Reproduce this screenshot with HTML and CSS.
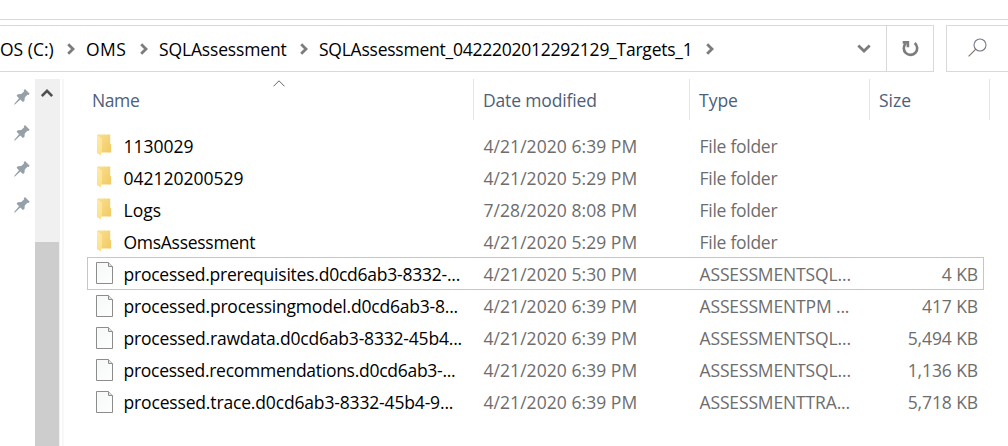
FILE: index.html
```html
<!DOCTYPE html>
<html lang="en">
<head>
<meta charset="utf-8">
<title>SQLAssessment_0422202012292129_Targets_1</title>
<link rel="stylesheet" href="styles.css">
</head>
<body>
<svg class="defs" width="0" height="0">
  <defs>
    <linearGradient id="gb" x1="0" y1="0" x2="1" y2="1"><stop offset="0" stop-color="#fbe08f"/><stop offset="1" stop-color="#efc95f"/></linearGradient>
    <linearGradient id="gf" x1="0" y1="0" x2="0" y2="1"><stop offset="0" stop-color="#ffeaae"/><stop offset="1" stop-color="#ffdf84"/></linearGradient>
    <linearGradient id="gp" x1="0" y1="0" x2="1" y2="1"><stop offset="0" stop-color="#f6f7f7"/><stop offset="1" stop-color="#fdfefe"/></linearGradient>
  </defs>
  <symbol id="folder" viewBox="0 0 15 22"><path d="M0 .5H13.2V9.5L14.2 10.5V18.5H4V21L0 19Z" fill="url(#gb)"/><path d="M0 1L4.3 4.2Q5 5 5 6V18.5H4V21.5L0 18.7Z" fill="url(#gf)"/></symbol>
  <symbol id="file" viewBox="0 0 17 22"><path d="M.5.5H12.5L16.5 4.5V21.5H.5Z" fill="url(#gp)" stroke="#8c8c8c"/><path d="M12.5 .5V4.5H16.5" fill="#e4e4e4" stroke="#8c8c8c"/></symbol>
  <symbol id="pin" viewBox="0 0 16 16"><path d="M9.8 1.2L11 0L15.7 4.7L14.5 5.9L13.4 5.7L10.8 8.6L10.4 12L8.9 13.1L6.3 10.4L1 15.4L.2 15.6L.4 14.7L5 9.2L2.6 6.7L3.8 5.2L7.2 5L10 2.4Z" fill="#95a0a8"/></symbol>
  <symbol id="chev" viewBox="0 0 8 12"><path d="M1.2 1.3L6 6L1.2 10.7" fill="none" stroke="#7c7c7c" stroke-width="2.8"/></symbol>
</svg>
<div class="explorer">
  <header class="toolbar">
    <div class="address">
      <nav class="crumbs">
        <span class="c-drive">OS (C:)</span><svg class="chev"><use href="#chev"/></svg>
        <span class="c-oms">OMS</span><svg class="chev"><use href="#chev"/></svg>
        <span class="c-sql">SQLAssessment</span><svg class="chev"><use href="#chev"/></svg>
        <span class="c-targets">SQLAssessment_0422202012292129_Targets_1</span><svg class="chev"><use href="#chev"/></svg>
      </nav>
      <svg class="drop" viewBox="0 0 14 9"><path d="M1.3 1.5L7 7L12.7 1.5" fill="none" stroke="#7c7c7c" stroke-width="2.8"/></svg>
      <div class="refresh"><svg width="17" height="17" viewBox="0 0 17 17"><path d="M12.7 3A6.7 6.7 0 1 1 3.7 3.5" fill="none" stroke="#7c7c7c" stroke-width="2.6"/><path d="M.7 1H7.2V7.2H4.6V3.8H.7Z" fill="#7c7c7c"/></svg></div>
    </div>
    <div class="search"><svg width="19" height="19" viewBox="0 0 19 19"><circle cx="12" cy="7" r="6" fill="none" stroke="#777b88" stroke-width="1.1"/><path d="M7.8 11.2L.6 18.4" stroke="#87756c" stroke-width="1.2"/></svg></div>
  </header>
  <main class="body">
    <aside class="pins">
      <svg><use href="#pin"/></svg><svg><use href="#pin"/></svg><svg><use href="#pin"/></svg><svg><use href="#pin"/></svg>
    </aside>
    <div class="scrollbar"><svg width="12" height="10" viewBox="0 0 12 10"><path d="M.8 8L6 2.8L11.2 8" fill="none" stroke="#505050" stroke-width="2.7"/></svg><div class="thumb"></div></div>
    <div class="splitter"></div>
    <section class="files">
      <div class="head">
        <div class="h-name"><span>Name</span><svg class="sort" width="12" height="7" viewBox="0 0 12 7"><path d="M.5 6.3L6 .8L11.5 6.3" fill="none" stroke="#666"/></svg></div>
        <div class="h-date"><span>Date modified</span></div><div class="h-type">Type</div><div class="h-size">Size</div>
      </div>
      <div class="row"><svg class="folder"><use href="#folder"/></svg><span class="name n1">1130029</span><span class="date">4/21/2020 6:39 PM</span><span class="type tf">File folder</span><span class="size"></span></div>
      <div class="row"><svg class="folder"><use href="#folder"/></svg><span class="name n2">042120200529</span><span class="date">4/21/2020 5:29 PM</span><span class="type tf">File folder</span><span class="size"></span></div>
      <div class="row"><svg class="folder"><use href="#folder"/></svg><span class="name n3">Logs</span><span class="date">7/28/2020 8:08 PM</span><span class="type tf">File folder</span><span class="size"></span></div>
      <div class="row"><svg class="folder"><use href="#folder"/></svg><span class="name n4">OmsAssessment</span><span class="date">4/21/2020 5:29 PM</span><span class="type tf">File folder</span><span class="size"></span></div>
      <div class="row focused"><svg class="file"><use href="#file"/></svg><span class="name n5">processed.prerequisites.d0cd6ab3-8332-...</span><span class="date">4/21/2020 5:30 PM</span><span class="type ts">ASSESSMENTSQL...</span><span class="size">4 KB</span></div>
      <div class="row"><svg class="file"><use href="#file"/></svg><span class="name n6">processed.processingmodel.d0cd6ab3-8...</span><span class="date">4/21/2020 6:39 PM</span><span class="type tp">ASSESSMENTPM ...</span><span class="size">417 KB</span></div>
      <div class="row"><svg class="file"><use href="#file"/></svg><span class="name n7">processed.rawdata.d0cd6ab3-8332-45b4...</span><span class="date">4/21/2020 6:39 PM</span><span class="type ts">ASSESSMENTSQL...</span><span class="size">5,494 KB</span></div>
      <div class="row"><svg class="file"><use href="#file"/></svg><span class="name n8">processed.recommendations.d0cd6ab3-...</span><span class="date">4/21/2020 6:39 PM</span><span class="type ts">ASSESSMENTSQL...</span><span class="size">1,136 KB</span></div>
      <div class="row"><svg class="file"><use href="#file"/></svg><span class="name n9">processed.trace.d0cd6ab3-8332-45b4-9...</span><span class="date">4/21/2020 6:39 PM</span><span class="type tt">ASSESSMENTTRA...</span><span class="size">5,718 KB</span></div>
    </section>
  </main>
</div>
</body>
</html>
```
FILE: styles.css
```css
* { box-sizing: border-box; }
body { margin: 0; background: #fff; color: #000; font: 17.5px/24px "Open Sans", "Noto Sans", sans-serif; overflow: hidden; }
svg { display: block; flex: none; }
.defs { position: absolute; }
.explorer { height: 446px; padding-top: 19px; display: flex; flex-direction: column; }
.toolbar { border-top: 1px solid #d9d9d9; padding-top: 5px; height: 60px; display: flex; gap: 12px; flex: none; }
.address { width: 934px; height: 47px; border: 1px solid #d9d9d9; border-left: 0; display: flex; align-items: center; }
.crumbs { flex: 1; display: grid; grid-template-columns: 67px 19px 54px 19px 141px 19px 387px 8px; align-items: center; white-space: nowrap; }
.c-oms { letter-spacing: .4px; }
.c-sql { letter-spacing: -.15px; }
.c-targets { letter-spacing: -.24px; }
.chev { width: 8px; height: 12px; }
.drop { width: 14px; height: 9px; margin-right: 15px; }
.refresh { width: 47px; height: 45px; border-left: 1px solid #d9d9d9; padding-left: 15px; display: flex; align-items: center; }
.search { flex: 1; height: 47px; border: 1px solid #d9d9d9; border-right: 0; padding: 12px 0 0 21px; }
.body { flex: 1; display: flex; min-height: 0; }
.pins { width: 35px; padding: 10px 0 0 14px; display: flex; flex-direction: column; gap: 20px; }
.pins svg { width: 16px; height: 16px; }
.scrollbar { width: 25px; background: #f0f0f0; padding-top: 9px; display: flex; flex-direction: column; }
.scrollbar svg { margin-left: 6px; }
.thumb { width: 24px; flex: 1; margin-top: 144px; background: #cdcdcd; }
.splitter { width: 2px; margin-left: 2px; background: #f7f7f7; }
.files { flex: 1; padding-left: 23px; }
.head { display: grid; grid-template-columns: 387px 216px 180px 120px; height: 41px; margin-bottom: 10px; color: #4c607a; }
.head > div { border-right: 1px solid #e5e5e5; padding: 9px 0 0 9px; }
.head .h-name { display: flex; padding-left: 5px; letter-spacing: -.4px; }
.h-name span { width: 47px; }
.h-date { letter-spacing: -.15px; }
.sort { margin: -8px 0 0 134px; }
.row { width: 897px; height: 32px; border: 1px solid transparent; padding-left: 8px; display: grid; grid-template-columns: 27.5px 360px 216px 180px 98.5px; align-items: center; white-space: nowrap; }
.row.focused { height: 33px; margin: -1px 0 0; border-color: #99d1ff; }
.folder { width: 15px; height: 22px; margin: -2px 0 0 1px; }
.file { width: 17px; height: 22px; margin-top: -1px; }
.n4 { letter-spacing: -.28px; }
.n5 { letter-spacing: -.23px; }
.n6 { letter-spacing: -.2px; }
.n7 { letter-spacing: -.19px; }
.n8 { letter-spacing: -.27px; }
.n9 { letter-spacing: -.16px; }
.date, .type, .size { color: #6d6d6d; }
.date { letter-spacing: .05px; }
.tf { letter-spacing: -.27px; }
.ts, .tp, .tt { letter-spacing: -.14px; }
.size { text-align: right; letter-spacing: -.1px; }
```
